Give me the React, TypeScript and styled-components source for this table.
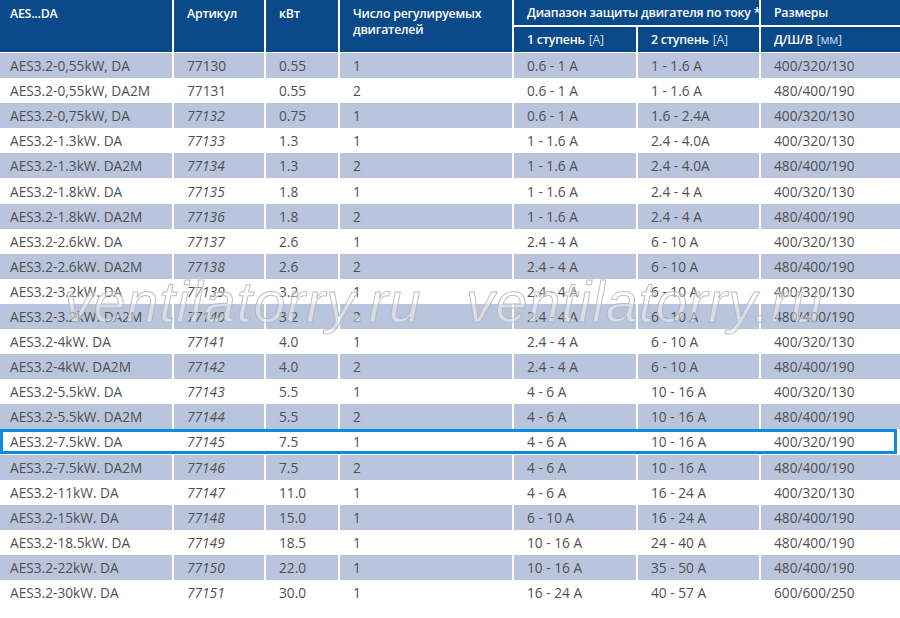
import React from "react";
import styled, { createGlobalStyle, css } from "styled-components";

const GlobalStyle = createGlobalStyle`
  html, body { margin: 0; padding: 0; background: #ffffff; }
  body { font-family: "Open Sans", "Noto Sans", sans-serif; }
`;

const COLS = "172px 90px 72px 172px 122px 121px 1fr";
const HEAD = "#0b4a8a";
const STRIPE = "#b9c5dd";
const TEXT = "#505050";

const Page = styled.div`
  position: relative;
  width: 900px;
  height: 618px;
  overflow: hidden;
  background: #fff;
`;

const HeaderGrid = styled.div`
  display: grid;
  grid-template-columns: ${COLS};
  grid-template-rows: 25px 25px;
  column-gap: 2px;
  row-gap: 2px;
  margin-bottom: 1px;
`;

const HeadCell = styled.div<{ $col: string; $row: string; $center?: boolean }>`
  grid-column: ${(p) => p.$col};
  grid-row: ${(p) => p.$row};
  background: ${HEAD};
  color: #fff;
  font-size: 12.3px;
  font-weight: 600;
  letter-spacing: -0.2px;
  line-height: 16px;
  padding: ${(p) => (p.$center ? "1px 0 0 13px" : "6px 0 0 13px")};
  display: flex;
  align-items: ${(p) => (p.$center ? "center" : "flex-start")};
  white-space: pre;
  overflow: hidden;
  &:first-child { padding-left: 10px; }
`;

const Unit = styled.span`
  font-weight: 400;
  color: #cfd9ec;
  margin-left: 4px;
`;

const Body = styled.div`
  display: flex;
  flex-direction: column;
`;

const Row = styled.div<{ $stripe: boolean; $selected?: boolean }>`
  position: relative;
  display: grid;
  grid-template-columns: ${COLS};
  column-gap: 2px;
  height: 25.1px;
  background: #fff;
  ${(p) =>
    p.$selected &&
    css`
      &::after {
        content: "";
        position: absolute;
        left: 0;
        top: 0;
        right: 3px;
        bottom: 1px;
        border: 3px solid #0a8ddc;
        pointer-events: none;
      }
    `}
  & > div {
    background: ${(p) => (p.$stripe ? STRIPE : "#fff")};
  }
`;

const Cell = styled.div<{ $italic?: boolean; $first?: boolean }>`
  display: flex;
  align-items: center;
  padding-left: ${(p) => (p.$first ? "10px" : "13px")};
  font-size: 13.7px;
  color: ${TEXT};
  font-style: ${(p) => (p.$italic ? "italic" : "normal")};
  white-space: nowrap;
`;

const Watermark = styled.div<{ $left: number }>`
  position: absolute;
  top: 269px;
  left: ${(p) => p.$left}px;
  font-family: "Liberation Sans", Arial, sans-serif;
  font-style: italic;
  font-weight: 400;
  font-size: 57px;
  letter-spacing: 1.1px;
  line-height: normal;
  color: rgba(255, 255, 255, 0.4);
  -webkit-text-stroke: 1px rgba(180, 180, 180, 0.85);
  pointer-events: none;
  white-space: nowrap;
`;

type R = [string, string, string, string, string, string, string];

const rows: R[] = [
  ["AES3.2-0,55kW, DA", "77130", "0.55", "1", "0.6 - 1 A", "1 - 1.6 A", "400/320/130"],
  ["AES3.2-0,55kW, DA2M", "77131", "0.55", "2", "0.6 - 1 A", "1 - 1.6 A", "480/400/190"],
  ["AES3.2-0,75kW, DA", "77132", "0.75", "1", "0.6 - 1 A", "1.6 - 2.4A", "400/320/130"],
  ["AES3.2-1.3kW. DA", "77133", "1.3", "1", "1 - 1.6 A", "2.4 - 4.0A", "400/320/130"],
  ["AES3.2-1.3kW. DA2M", "77134", "1.3", "2", "1 - 1.6 A", "2.4 - 4.0A", "480/400/190"],
  ["AES3.2-1.8kW. DA", "77135", "1.8", "1", "1 - 1.6 A", "2.4 - 4 A", "400/320/130"],
  ["AES3.2-1.8kW. DA2M", "77136", "1.8", "2", "1 - 1.6 A", "2.4 - 4 A", "480/400/190"],
  ["AES3.2-2.6kW. DA", "77137", "2.6", "1", "2.4 - 4 A", "6 - 10 A", "400/320/130"],
  ["AES3.2-2.6kW. DA2M", "77138", "2.6", "2", "2.4 - 4 A", "6 - 10 A", "480/400/190"],
  ["AES3.2-3.2kW. DA", "77139", "3.2", "1", "2.4 - 4 A", "6 - 10 A", "400/320/130"],
  ["AES3.2-3.2kW. DA2M", "77140", "3.2", "2", "2.4 - 4 A", "6 - 10 A", "480/400/190"],
  ["AES3.2-4kW. DA", "77141", "4.0", "1", "2.4 - 4 A", "6 - 10 A", "400/320/130"],
  ["AES3.2-4kW. DA2M", "77142", "4.0", "2", "2.4 - 4 A", "6 - 10 A", "480/400/190"],
  ["AES3.2-5.5kW. DA", "77143", "5.5", "1", "4 - 6 A", "10 - 16 A", "400/320/130"],
  ["AES3.2-5.5kW. DA2M", "77144", "5.5", "2", "4 - 6 A", "10 - 16 A", "480/400/190"],
  ["AES3.2-7.5kW. DA", "77145", "7.5", "1", "4 - 6 A", "10 - 16 A", "400/320/190"],
  ["AES3.2-7.5kW. DA2M", "77146", "7.5", "2", "4 - 6 A", "10 - 16 A", "480/400/190"],
  ["AES3.2-11kW. DA", "77147", "11.0", "1", "4 - 6 A", "16 - 24 A", "400/320/130"],
  ["AES3.2-15kW. DA", "77148", "15.0", "1", "6 - 10 A", "16 - 24 A", "480/400/190"],
  ["AES3.2-18.5kW. DA", "77149", "18.5", "1", "10 - 16 A", "24 - 40 A", "480/400/190"],
  ["AES3.2-22kW. DA", "77150", "22.0", "1", "10 - 16 A", "35 - 50 A", "480/400/190"],
  ["AES3.2-30kW. DA", "77151", "30.0", "1", "16 - 24 A", "40 - 57 A", "600/600/250"],
];

export default function App() {
  return (
    <Page>
      <GlobalStyle />
      <HeaderGrid>
        <HeadCell $col="1" $row="1 / span 2">AES...DA</HeadCell>
        <HeadCell $col="2" $row="1 / span 2">Артикул</HeadCell>
        <HeadCell $col="3" $row="1 / span 2">кВт</HeadCell>
        <HeadCell $col="4" $row="1 / span 2">{"Число регулируемых\nдвигателей"}</HeadCell>
        <HeadCell $col="5 / span 2" $row="1" $center>
          Диапазон защиты двигателя по току *
        </HeadCell>
        <HeadCell $col="7" $row="1" $center>Размеры</HeadCell>
        <HeadCell $col="5" $row="2" $center>
          1 ступень<Unit>[A]</Unit>
        </HeadCell>
        <HeadCell $col="6" $row="2" $center>
          2 ступень<Unit>[A]</Unit>
        </HeadCell>
        <HeadCell $col="7" $row="2" $center>
          Д/Ш/В<Unit>[мм]</Unit>
        </HeadCell>
      </HeaderGrid>
      <Body>
        {rows.map((r, i) => (
          <Row key={r[1]} $stripe={i % 2 === 0} $selected={r[1] === "77145"}>
            <Cell $first>{r[0]}</Cell>
            <Cell $italic={i >= 2}>{r[1]}</Cell>
            <Cell>{r[2]}</Cell>
            <Cell>{r[3]}</Cell>
            <Cell>{r[4]}</Cell>
            <Cell>{r[5]}</Cell>
            <Cell>{r[6]}</Cell>
          </Row>
        ))}
      </Body>
      <Watermark $left={64}>ventilatorry.ru</Watermark>
      <Watermark $left={466}>ventilatorry.ru</Watermark>
    </Page>
  );
}
